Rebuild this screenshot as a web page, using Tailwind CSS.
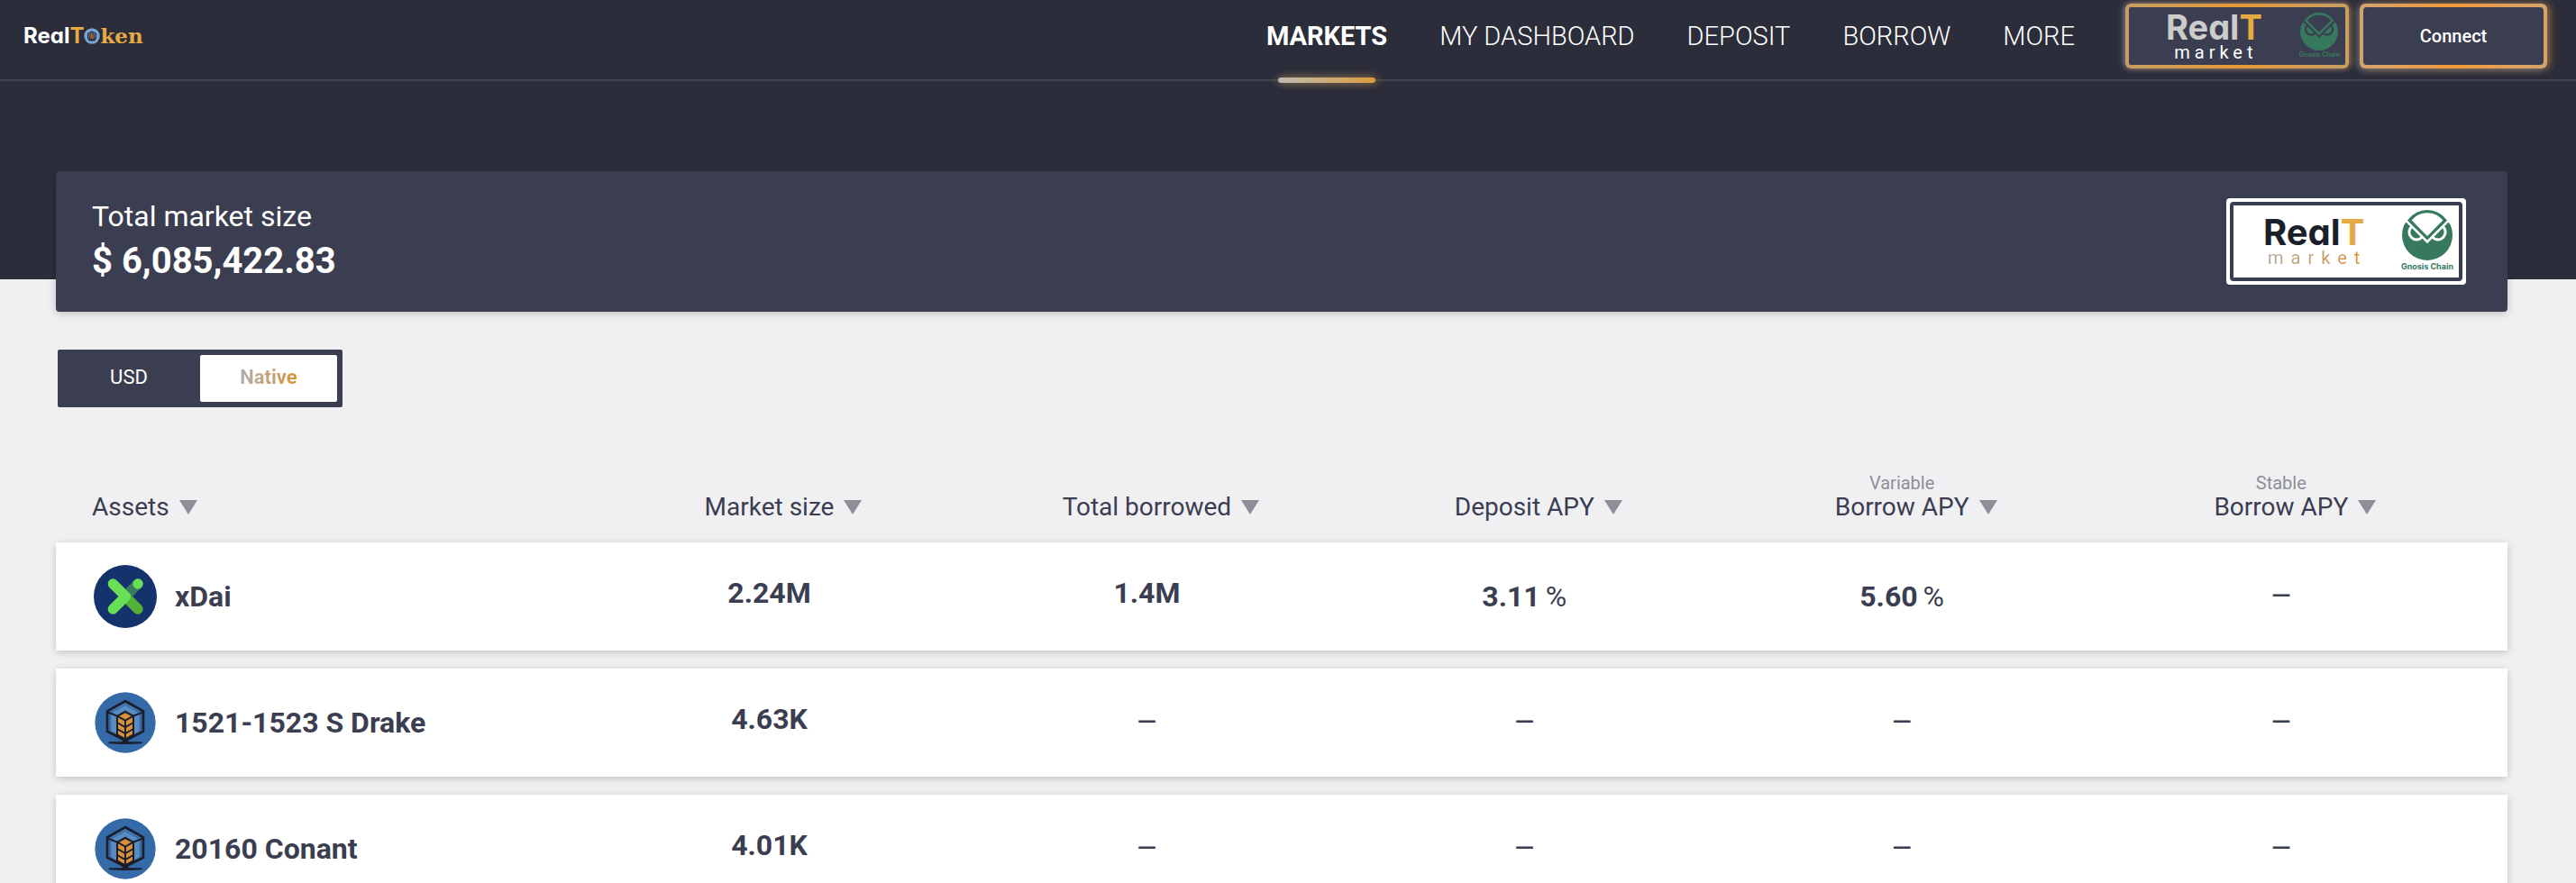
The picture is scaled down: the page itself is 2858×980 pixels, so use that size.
<!doctype html>
<html lang="en">
<head>
  <meta charset="UTF-8">
  <meta name="viewport" content="width=device-width, initial-scale=1.0">
  <script src="https://cdn.jsdelivr.net/npm/@tailwindcss/browser@4"></script>
  <title>RealT market</title>
</head>
<body class="bg-[#f0f0f3] font-[Roboto,sans-serif] text-[#3b3d50]">

  <!-- Shared icons -->
  <svg class="hidden">
    <symbol id="owl" viewBox="0 0 170 170">
      <circle cx="85" cy="85" r="85" fill="#36795c" />
      <g fill="none" stroke="currentColor" stroke-width="9">
        <circle cx="49" cy="75" r="25" />
        <circle cx="121" cy="75" r="25" />
      </g>
      <path d="M14 42 L85 113 L156 42 L170 42 V-5 H0 V42 Z" fill="currentColor" />
      <path d="M25 35 Q49 5 85 5 Q121 5 145 35 L85 95 Z" fill="currentColor" stroke="#36795c" stroke-width="10" />
    </symbol>
    <symbol id="coin" viewBox="0 0 54 54">
      <circle cx="27" cy="27" r="26" fill="#7ba3d3" />
      <path d="M27 12 L40 19 V35 L27 42 L14 35 V19 Z" fill="#7ba3d3" stroke="#262a3c" stroke-width="4" />
      <path d="M27 17 L34 22 V38 H20 V22 Z" fill="#9a6234" stroke="#262a3c" stroke-width="3" />
      <path d="M16 41 H38" stroke="#262a3c" stroke-width="4" />
    </symbol>
    <symbol id="realtoken" viewBox="195 113 204 204">
      <circle cx="297" cy="215" r="101" fill="#356aa9" />
      <path d="M250 187 L268 195 V252 L250 243 Z M344 187 L326 195 V252 L344 243 Z" fill="#5a8cc2" />
      <path d="M297 158 L340 181 L324 190 L297 174 L270 190 L254 181 Z" fill="#5a8cc2" />
      <path d="M254 174 L297 153 L340 174" fill="none" stroke="#7fa9d4" stroke-width="2" stroke-dasharray="3 2" />
      <path d="M297 178 L325 194 V258 L297 274 L269 258 V194 Z" fill="#d9923a" />
      <g fill="none" stroke="#1c1e2b" stroke-width="6">
        <path d="M297 143 L357 177 V244 L297 275 L237 244 V177 Z" stroke-width="8" />
        <path d="M237 180 L270 193 V262 M357 180 L324 193 V262" />
        <path d="M271 193 L297 179 L323 193" />
        <path d="M270 193 L297 208 L324 193 M270 215 L297 230 L324 215 M270 236 L297 251 L324 236 M270 255 L297 270 L324 255 M297 207 V276" />
      </g>
      <path d="M241 282 Q241 279 246 279 H284 L297 270 L310 279 H348 Q353 279 353 282 Q353 285 348 285 L310 287 H284 L246 285 Q241 285 241 282 Z" fill="#1c1e2b" />
    </symbol>
    <symbol id="xdai" viewBox="192 351 210 210">
      <circle cx="297" cy="456" r="105" fill="#14326c" />
      <g fill="none" stroke-width="34" stroke-linecap="round" stroke-linejoin="round">
        <path d="M297 456 L339 414" stroke="#387a62" />
        <path d="M297 456 L339 498" stroke="#53b236" />
        <path d="M256 414 L298 456 L256 498" stroke="#68e056" />
      </g>
      <circle cx="339" cy="414" r="17" fill="#68e056" />
    </symbol>
    <symbol id="sort" viewBox="0 0 20 16">
      <path d="M0 0 H20 L10 16 Z" fill="#8d8f98" />
    </symbol>
  </svg>

  <div class="h-screen overflow-hidden">
    <!-- Header -->
    <header class="flex h-[90px] items-start justify-between border-b-2 border-[#424452] bg-[#2c2d3a] pr-8 pl-[26px] text-white">
      <a href="#" class="flex h-[80px] items-center text-2xl font-bold" aria-label="RealToken">
        <span class="font-[Inter,sans-serif] [font-feature-settings:'cv11']">Real<span class="text-[#e6aa42]">T</span></span>
        <svg class="size-[18px]"><use href="#coin" /></svg>
        <span class="font-['DejaVu_Serif',serif] text-[23px] text-[#e6aa42]">ken</span>
      </a>

      <div class="flex">
        <nav class="mr-14 flex h-[88px] gap-[58px] text-[29px] leading-[80px] font-light">
          <a href="#" class="relative font-bold">MARKETS
            <span class="absolute inset-x-0 -bottom-1 mx-auto h-[6px] w-4/5 rounded-full bg-linear-to-r from-[#bcb9b0] to-[#dc9b34] shadow-[-3px_0_10px_rgba(188,185,176,0.3),3px_0_10px_rgba(220,155,52,0.5)]"></span>
          </a>
          <a href="#">MY DASHBOARD</a>
          <a href="#">DEPOSIT</a>
          <a href="#">BORROW</a>
          <a href="#">MORE</a>
        </nav>

        <div class="flex gap-3 pt-1">
          <button class="h-[72px] w-[248px] rounded-md bg-linear-to-r from-[#c69d62] via-[#e59a34] to-[#c69d62] p-1 shadow-[-2px_0_6px_rgba(170,180,205,0.5),2px_0_6px_rgba(243,154,54,0.5)]">
            <span class="flex h-full items-center justify-between rounded-xs bg-[#3b3d50] pr-[6px] pl-[41px]">
              <span class="flex flex-col items-center">
                <span class="font-[Inter,sans-serif] text-[38px] leading-9 font-bold text-[#cccccc] [font-feature-settings:'cv11']">Real<span class="text-[#e6aa42]">T</span></span>
                <span class="pl-1 text-xl leading-5 tracking-[5px]">market</span>
              </span>
              <span class="flex flex-col items-center text-[7px] leading-[10px] font-bold text-[#36795c]">
                <svg class="size-[42px] text-[#3b3d50]"><use href="#owl" /></svg>
                <span class="font-[Inter,sans-serif]">Gnosis Chain</span>
              </span>
            </span>
          </button>
          <button class="h-[72px] w-[208px] rounded-md bg-linear-to-r from-[#d2a36e] via-[#f39a36] to-[#d2a36e] p-1 shadow-[-3px_2px_8px_rgba(170,180,205,0.4),3px_0_8px_rgba(243,154,54,0.5)]">
            <span class="flex h-full items-center justify-center rounded-sm bg-[#3b3d50] text-xl font-medium">Connect</span>
          </button>
        </div>
      </div>
    </header>

    <div class="h-[220px] bg-[#2c2d3a]"></div>

    <main class="relative -mt-[120px] pr-[76px] pl-[62px]">
      <!-- Market summary -->
      <section class="flex h-[156px] items-center justify-between rounded-sm bg-[#3b3d50] pr-[46px] pl-10 text-white shadow-[0_2px_10px_rgba(0,0,0,0.2)]">
        <div>
          <p class="text-[32px] leading-[44px]">Total market size</p>
          <p class="text-[40px] leading-[56px] font-bold">$ 6,085,422.83</p>
        </div>
        <button class="h-24 w-[266px] rounded-sm bg-white p-1">
          <span class="flex h-full items-center justify-between rounded-sm border-4 border-[#3b3d50] bg-white pr-[6px] pl-[30px]">
            <span class="flex flex-col items-center">
              <span class="font-[Inter,sans-serif] text-[40px] leading-9 font-bold text-[#1b1f2a] [font-feature-settings:'cv11']">Real<span class="text-[#e6aa42]">T</span></span>
              <span class="bg-linear-to-r from-[#aeaaa0] to-[#dc9228] bg-clip-text pl-2 text-xl leading-5 tracking-[8px] text-transparent">market</span>
            </span>
            <span class="flex flex-col items-center text-[9px] leading-[14px] font-bold text-[#36795c]">
              <svg class="size-14 text-white"><use href="#owl" /></svg>
              <span class="font-[Inter,sans-serif]">Gnosis Chain</span>
            </span>
          </span>
        </button>
      </section>

      <!-- Currency switch -->
      <div class="mt-[42px] ml-[2px] flex h-16 w-[316px] rounded-xs bg-[#3b3d50] py-[6px] pr-[6px] text-[22px] leading-7">
        <button class="flex-1 rounded-xs pb-[2px] text-white">USD</button>
        <button class="w-[152px] rounded-xs bg-white pb-[2px] font-bold">
          <span class="bg-linear-to-r from-[#aeaeae] to-[#dc9228] bg-clip-text text-transparent">Native</span>
        </button>
      </div>

      <!-- Assets -->
      <table class="mt-[53px] w-full table-fixed border-separate border-spacing-x-0 border-spacing-y-5 text-center">
        <colgroup>
          <col class="w-[21.4%]">
          <col class="w-[15.4%]">
          <col class="w-[15.4%]">
          <col class="w-[15.4%]">
          <col class="w-[15.4%]">
          <col class="w-[17%]">
        </colgroup>
        <thead class="align-bottom text-[28px] leading-8">
          <tr>
            <th class="pb-[3px] pl-10 text-left font-normal">
              <button class="flex items-center gap-[11px]">Assets<svg class="h-4 w-5"><use href="#sort" /></svg></button>
            </th>
            <th class="pb-[3px] font-normal">
              <button class="flex w-full items-center justify-center gap-[11px]">Market size<svg class="-mr-[31px] h-4 w-5"><use href="#sort" /></svg></button>
            </th>
            <th class="pb-[3px] font-normal">
              <button class="flex w-full items-center justify-center gap-[11px]">Total borrowed<svg class="-mr-[31px] h-4 w-5"><use href="#sort" /></svg></button>
            </th>
            <th class="pb-[3px] font-normal">
              <button class="flex w-full items-center justify-center gap-[11px]">Deposit APY<svg class="-mr-[31px] h-4 w-5"><use href="#sort" /></svg></button>
            </th>
            <th class="pb-[3px] font-normal">
              <p class="text-xl leading-[22px] text-[#8d8f98]">Variable</p>
              <button class="flex w-full items-center justify-center gap-[11px]">Borrow APY<svg class="-mr-[31px] h-4 w-5"><use href="#sort" /></svg></button>
            </th>
            <th class="pr-10 pb-[3px] font-normal">
              <p class="text-xl leading-[22px] text-[#8d8f98]">Stable</p>
              <button class="flex w-full items-center justify-center gap-[11px]">Borrow APY<svg class="-mr-[31px] h-4 w-5"><use href="#sort" /></svg></button>
            </th>
          </tr>
        </thead>
        <tbody class="text-[32px] leading-10">
          <tr class="h-[120px] rounded-sm bg-white font-bold shadow-[0_2px_8px_rgba(0,0,0,0.2)]">
            <td class="pl-10">
              <div class="flex items-center gap-[18px]"><svg class="h-[70px] w-[74px]"><use href="#xdai" /></svg>xDai</div>
            </td>
            <td class="pb-2">2.24M</td>
            <td class="pb-2">1.4M</td>
            <td>3.11<span class="ml-[6px] font-normal">%</span></td>
            <td>5.60<span class="ml-[6px] font-normal">%</span></td>
            <td class="pr-10 text-[28px] font-medium">—</td>
          </tr>
          <tr class="h-[120px] rounded-sm bg-white font-bold shadow-[0_2px_8px_rgba(0,0,0,0.2)]">
            <td class="pl-10">
              <div class="flex items-center gap-[18px]"><svg class="h-[68px] w-[74px]"><use href="#realtoken" /></svg>1521-1523 S Drake</div>
            </td>
            <td class="pb-2">4.63K</td>
            <td class="text-[28px] font-medium">—</td>
            <td class="text-[28px] font-medium">—</td>
            <td class="text-[28px] font-medium">—</td>
            <td class="pr-10 text-[28px] font-medium">—</td>
          </tr>
          <tr class="h-[120px] rounded-sm bg-white font-bold shadow-[0_2px_8px_rgba(0,0,0,0.2)]">
            <td class="pl-10">
              <div class="flex items-center gap-[18px]"><svg class="h-[68px] w-[74px]"><use href="#realtoken" /></svg>20160 Conant</div>
            </td>
            <td class="pb-2">4.01K</td>
            <td class="text-[28px] font-medium">—</td>
            <td class="text-[28px] font-medium">—</td>
            <td class="text-[28px] font-medium">—</td>
            <td class="pr-10 text-[28px] font-medium">—</td>
          </tr>
        </tbody>
      </table>
    </main>
  </div>
</body>
</html>
